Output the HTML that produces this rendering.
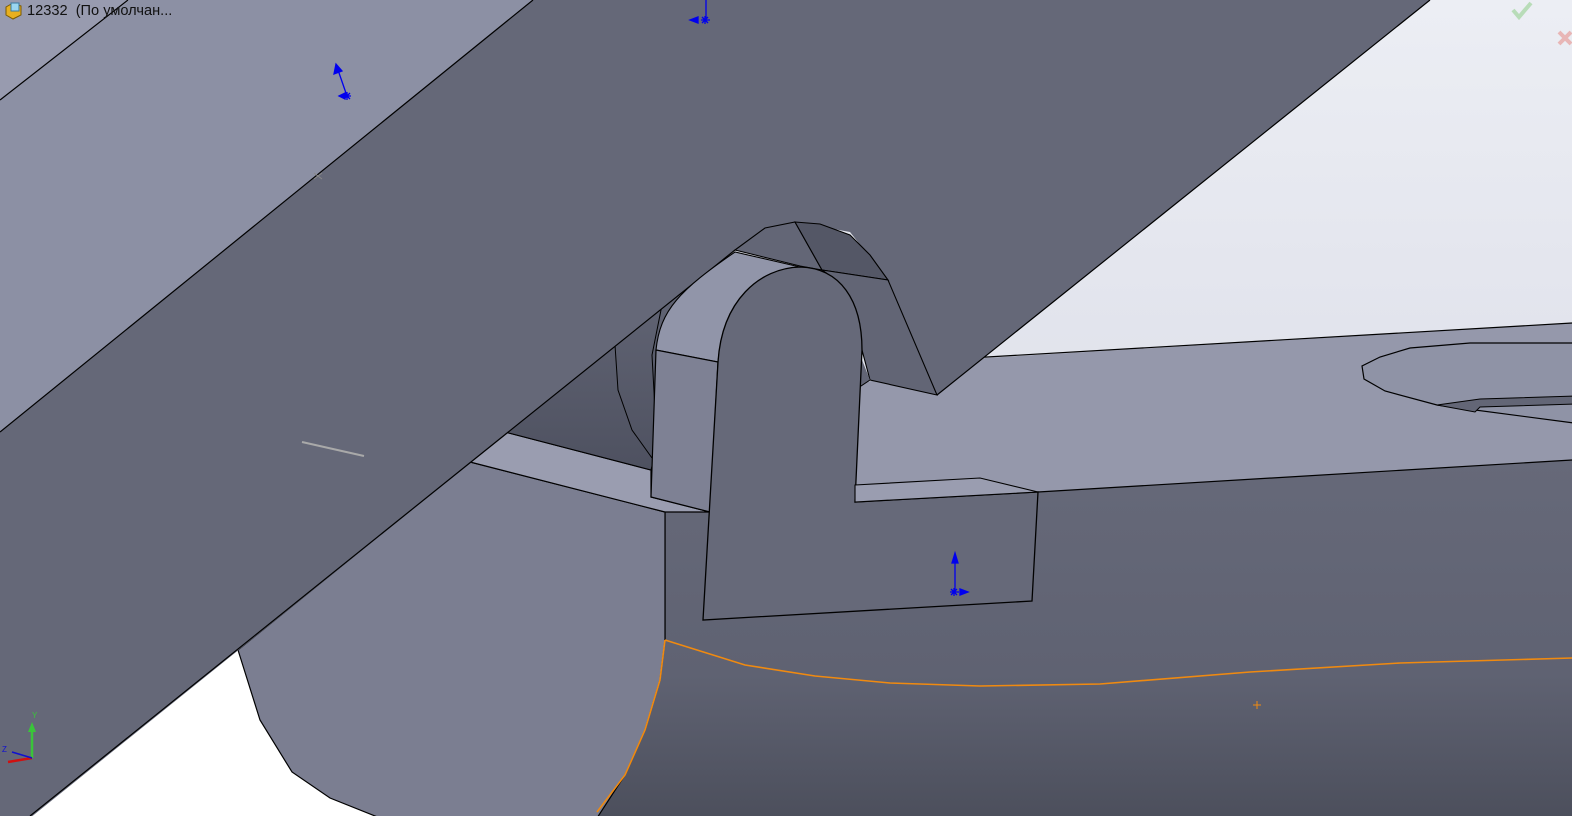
<!DOCTYPE html>
<html><head><meta charset="utf-8"><style>
html,body{margin:0;padding:0;width:1572px;height:816px;overflow:hidden;background:#fff}
svg{display:block}
.t{position:absolute;left:27px;top:3px;font:14.6px "Liberation Sans",sans-serif;color:#111}
</style></head><body>
<svg width="1572" height="816" viewBox="0 0 1572 816" xmlns="http://www.w3.org/2000/svg">
<defs>
<linearGradient id="bg" x1="0" y1="0" x2="0" y2="1"><stop offset="0" stop-color="#eceef4"/><stop offset="0.45" stop-color="#e1e3ec"/><stop offset="0.8" stop-color="#ffffff"/><stop offset="1" stop-color="#ffffff"/></linearGradient>
<linearGradient id="front" x1="0" y1="0" x2="0" y2="1"><stop offset="0" stop-color="#666979"/><stop offset="0.6" stop-color="#5f6272"/><stop offset="1" stop-color="#4c4f5c"/></linearGradient>
<linearGradient id="cyl" x1="0" y1="0" x2="0" y2="1"><stop offset="0" stop-color="#636676"/><stop offset="1" stop-color="#4e5160"/></linearGradient>
</defs>
<rect width="1572" height="816" fill="url(#bg)"/>
<!-- base top face -->
<polygon points="470,462 985,358 1574,323 1574,460 1038,492 665,512" fill="#9598ab"/>
<line x1="970" y1="358" x2="1572" y2="323" stroke="#000" stroke-width="1.2"/>
<!-- hole -->
<path d="M1574,343 L1470,343 L1410,348 L1380,357 L1362,366 L1364,379 L1385,391 L1437,405 L1574,423" fill="#8f93a6" stroke="#000" stroke-width="1.2"/>
<path d="M1437,405 L1480,399 L1574,396 L1574,404 L1480,407 L1475,412 Z" fill="#636676" stroke="#000" stroke-width="1"/>
<!-- base front -->
<polygon points="665,512 1038,492 1574,460 1574,818 597,818 625,775 645,730 660,680 665,640" fill="url(#front)"/>
<line x1="1038" y1="492" x2="1572" y2="460" stroke="#000" stroke-width="1.2"/>
<line x1="665" y1="512" x2="665" y2="640" stroke="#000" stroke-width="1.2"/>
<!-- left lobe -->
<polygon points="470,462 665,512 665,640 660,680 645,730 625,775 597,818 380,818 330,798 292,772 260,720 238,650" fill="#7b7e91" stroke="#000" stroke-width="1.2"/>
<!-- strip top left -->
<polygon points="470,462 505,432 651,470 651,497 710,512 665,512" fill="#9a9db0" stroke="#000" stroke-width="1.2"/>
<!-- pin cylinder -->
<polygon points="505,432 705,272 651,470" fill="url(#cyl)" stroke="#000" stroke-width="1.1"/>
<path d="M615,345 L618,390 L632,430 L652,458" fill="none" stroke="#000" stroke-width="1"/>
<path d="M662,305 L652,355 L655,410 L660,440" fill="none" stroke="#000" stroke-width="1"/>
<!-- orange sketch -->
<polyline points="665,640 745,665 815,676 890,683 980,686 1100,684 1250,672 1400,663 1572,658" fill="none" stroke="#f08a10" stroke-width="1.6"/>
<polyline points="665,640 660,680 645,730 625,775 597,812" fill="none" stroke="#f08a10" stroke-width="1.6"/>
<path d="M1253,705h8M1257,701v8" stroke="#f08a10" stroke-width="1"/>
<!-- upper light area -->
<polygon points="0,0 533,0 0,432" fill="#8c90a4"/>
<polygon points="0,0 130,0 0,100" fill="#989baf"/>
<line x1="0" y1="100" x2="128" y2="0" stroke="#000" stroke-width="1.2"/>
<!-- beam -->
<polygon points="0,432 533,0 1430,0 937,395 888,280 850,232 795,222 765,228 735,250 30,818 -2,818 -2,432" fill="#656878"/>
<line x1="0" y1="432" x2="533" y2="0" stroke="#000" stroke-width="1.2"/>
<line x1="1430" y1="0" x2="937" y2="395" stroke="#000" stroke-width="1.2"/>
<line x1="735" y1="250" x2="30" y2="816" stroke="#000" stroke-width="1.2"/>
<!-- hinge knuckle top -->
<path d="M735,250 L765,228 L795,222 L822,270 L800,266 Z" fill="#636676" stroke="#000" stroke-width="1.1"/>
<path d="M795,222 L820,224 L850,235 L870,255 L888,280 L822,270 Z" fill="#545766" stroke="#000" stroke-width="1.1"/>
<path d="M888,280 L937,395 L870,380 L862,350 C860,320 845,285 822,270 Z" fill="#626575" stroke="#000" stroke-width="1.1"/>
<path d="M870,380 L855,390 L858,350" fill="#626575" stroke="#000" stroke-width="1"/>
<!-- lug light side -->
<path d="M656,350 C660,310 680,290 735,252 L800,267 C755,275 722,315 718,362 Z" fill="#9195a9" stroke="#000" stroke-width="1.1"/>
<polygon points="651,497 656,350 718,362 710,512" fill="#7e8194" stroke="#000" stroke-width="1.2"/>
<!-- lug front -->
<path d="M703,620 L718,362 C722,300 760,268 800,267 C840,268 862,300 862,350 L855,502 L1038,492 L1032,601 Z" fill="#666979" stroke="#000" stroke-width="1.3"/>
<polygon points="855,485 980,478 1038,492 855,502" fill="#9a9db0" stroke="#000" stroke-width="1.1"/>
<!-- thin grey line -->
<line x1="302" y1="442" x2="364" y2="456" stroke="#a9a9a9" stroke-width="2"/>
<path d="M314,173l8,6M322,173l-8,6" stroke="#888" stroke-width="1"/>
<!-- blue triads -->
<g stroke="#0000ee" fill="#0000ee" stroke-width="1.3">
<line x1="347" y1="96" x2="338" y2="70"/><polygon points="336,64 334,74 342,71"/><polygon points="339,96 345,93 345,99"/>
<path d="M343,96h8M347,92v8M344,93l6,6M350,93l-6,6"/>
<line x1="706" y1="0" x2="706" y2="18"/><polygon points="690,20 698,17 698,23"/><path d="M701,20h9M705,16v8M702,17l6,6M708,17l-6,6"/>
<line x1="955" y1="592" x2="955" y2="560"/><polygon points="955,553 952,563 958,563"/><polygon points="968,592 960,589 960,595"/><path d="M950,592h9M954,588v8M951,589l6,6M957,589l-6,6"/>
</g>
<!-- axis triad -->
<line x1="32" y1="758" x2="32" y2="728" stroke="#3ac43a" stroke-width="2.5"/><polygon points="32,722 28,732 36,732" fill="#3ac43a"/>
<text x="32" y="718" font-size="8" fill="#3ac43a" font-family="Liberation Sans">Y</text>
<line x1="8" y1="762" x2="32" y2="758" stroke="#d01010" stroke-width="2.5"/>
<line x1="32" y1="758" x2="12" y2="752" stroke="#1010d0" stroke-width="1.5"/>
<text x="2" y="752" font-size="8" fill="#1010d0" font-family="Liberation Sans">Z</text>
<!-- check / x -->
<path d="M1513,10l6,7l12,-14" fill="none" stroke="#b8dcb8" stroke-width="4"/>
<path d="M1559,32l12,12M1571,32l-12,12" stroke="#e8b6b6" stroke-width="4"/>
<!-- part icon -->
<path d="M6,7l7,-4l8,3v9l-8,4l-7,-4z" fill="#e8b020" stroke="#7a5a00" stroke-width="1"/>
<rect x="11" y="3" width="8" height="8" fill="#9ad6f0" stroke="#3a7aa0" stroke-width="1"/>
</svg>
<div class="t">12332 &nbsp;(По умолчан...</div>
</body></html>
